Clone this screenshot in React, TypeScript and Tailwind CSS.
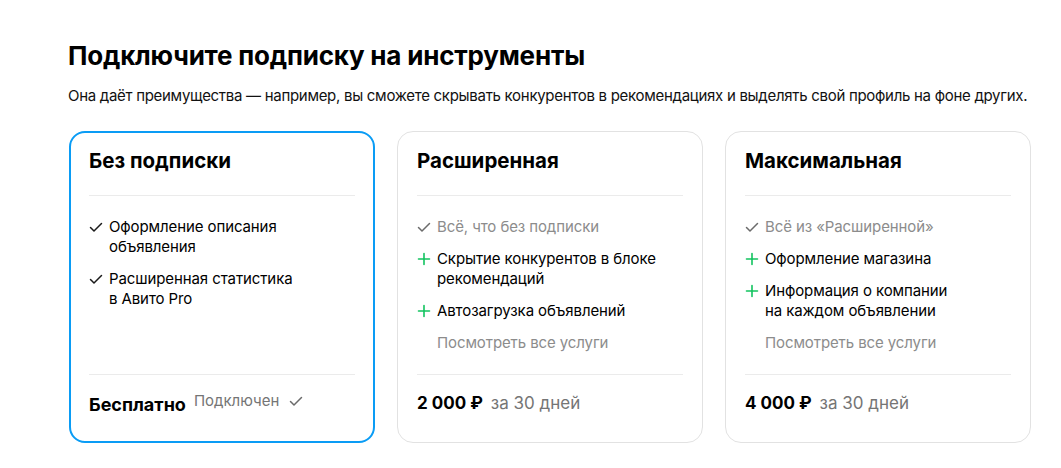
import React from 'react'

const font = { fontFamily: 'Inter, "Noto Sans", sans-serif' }

function Check({ gray }: { gray?: boolean }) {
  return (
    <svg width="14" height="20" viewBox="0 0 14 20" fill="none" className="shrink-0">
      <path d="M1.5 10.5 L5 14 L12.5 6.5" stroke={gray ? '#6b6b6b' : '#1a1a1a'} strokeWidth="1.5" strokeLinecap="round" strokeLinejoin="round" />
    </svg>
  )
}

function Plus() {
  return (
    <svg width="14" height="20" viewBox="0 0 14 20" fill="none" className="shrink-0">
      <path d="M7 4.5 V15.5 M1.5 10 H12.5" stroke="#12c35f" strokeWidth="1.6" strokeLinecap="round" />
    </svg>
  )
}

type Item = { kind: 'check' | 'base' | 'plus' | 'link'; text: React.ReactNode }

const plans: { title: string; items: Item[]; active?: boolean; price: React.ReactNode }[] = [
  {
    title: 'Без подписки',
    active: true,
    items: [
      { kind: 'check', text: <>Оформление описания<br />объявления</> },
      { kind: 'check', text: <>Расширенная статистика<br />в Авито Pro</> },
    ],
    price: (
      <>
        <span className="text-[18px] font-bold text-black">Бесплатно</span>
        <span className="ml-2 text-[15px] text-[#757575] -translate-y-[3px]">Подключен</span>
        <span className="ml-[10px] -translate-y-[3px]"><Check gray /></span>
      </>
    ),
  },
  {
    title: 'Расширенная',
    items: [
      { kind: 'base', text: 'Всё, что без подписки' },
      { kind: 'plus', text: <>Скрытие конкурентов в блоке<br />рекомендаций</> },
      { kind: 'plus', text: 'Автозагрузка объявлений' },
      { kind: 'link', text: 'Посмотреть все услуги' },
    ],
    price: (
      <>
        <span className="text-[17px] font-bold text-black">2 000 ₽</span>
        <span className="ml-2 text-[17px] text-[#757575]">за 30 дней</span>
      </>
    ),
  },
  {
    title: 'Максимальная',
    items: [
      { kind: 'base', text: 'Всё из «Расширенной»' },
      { kind: 'plus', text: 'Оформление магазина' },
      { kind: 'plus', text: <>Информация о компании<br />на каждом объявлении</> },
      { kind: 'link', text: 'Посмотреть все услуги' },
    ],
    price: (
      <>
        <span className="text-[17px] font-bold text-black">4 000 ₽</span>
        <span className="ml-2 text-[17px] text-[#757575]">за 30 дней</span>
      </>
    ),
  },
]

export default function App() {
  return (
    <div className="min-h-[468px] w-full bg-white" style={font}>
      <div className="pl-[68px] pr-[30px] pt-[38px]">
        <h1 className="text-[26px] leading-[36px] font-bold text-black tracking-[-0.2px]">Подключите подписку на инструменты</h1>
        <p className="mt-[12px] whitespace-nowrap text-[15px] leading-[20px] text-[#111] tracking-[-0.29px]">
          Она даёт преимущества — например, вы сможете скрывать конкурентов в рекомендациях и выделять свой профиль на фоне других.
        </p>
        <div className="mt-[25px] ml-px grid grid-cols-[306px_306px_306px] gap-[22px]">
          {plans.map(p => (
            <div
              key={p.title}
              className={`flex flex-col rounded-[16px] ${p.active ? 'border-2 border-[#0a9cf5] px-[18px] pt-[14px] pb-[25px]' : 'border border-[#e2e2e2] px-[19px] pt-[15px] pb-[26px]'}`}
            >
              <div className="text-[20.5px] leading-[28px] font-bold text-black">{p.title}</div>
              <div className="mt-[20px] h-px bg-[#ebebeb]" />
              <div className="mt-[21px] flex flex-col gap-[12px] flex-1">
                {p.items.map((it, i) => (
                  <div key={i} className="flex items-start gap-[6px] text-[15px] leading-[20px] tracking-[-0.1px]">
                    {it.kind === 'check' && <Check />}
                    {it.kind === 'base' && <Check gray />}
                    {it.kind === 'plus' && <Plus />}
                    {it.kind === 'link' && <span className="w-[14px] shrink-0" />}
                    <span className={it.kind === 'base' || it.kind === 'link' ? 'text-[#8c8c8c]' : 'text-black'}>{it.text}</span>
                  </div>
                ))}
              </div>
              <div className="mt-[21px] h-px bg-[#ebebeb]" />
              <div className="mt-[17px] flex items-center h-[24px]">{p.price}</div>
            </div>
          ))}
        </div>
      </div>
    </div>
  )
}
